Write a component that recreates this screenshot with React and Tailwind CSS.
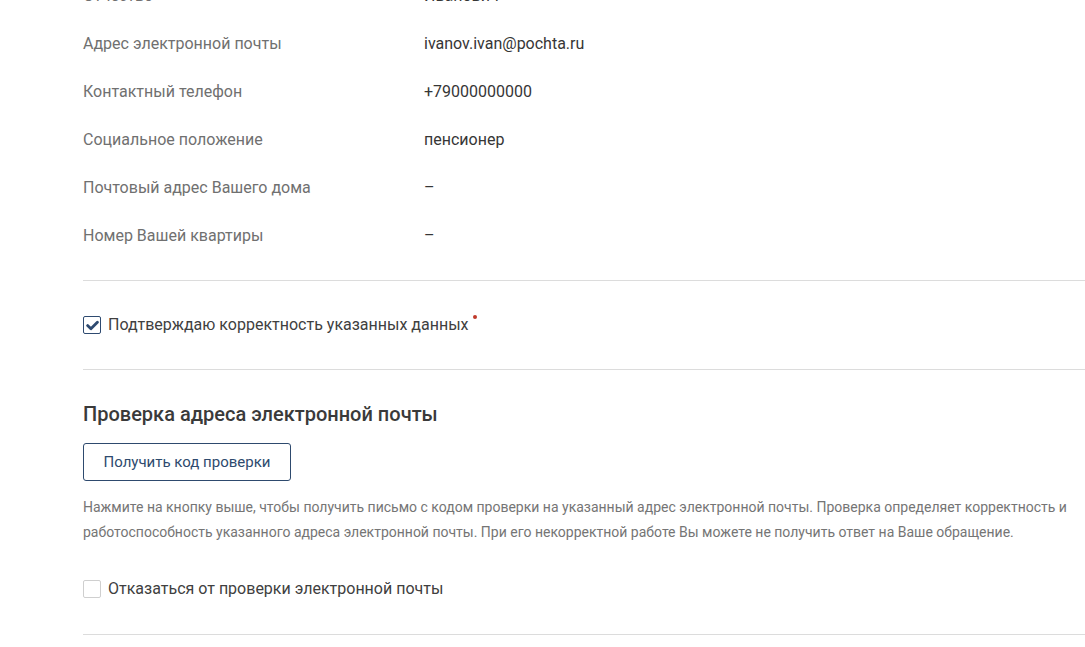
import React from "react";

const rows = [
  ["Отчество", "Иванович"],
  ["Адрес электронной почты", "ivanov.ivan@pochta.ru"],
  ["Контактный телефон", "+79000000000"],
  ["Социальное положение", "пенсионер"],
  ["Почтовый адрес Вашего дома", "–"],
  ["Номер Вашей квартиры", "–"],
];

function Check({ checked }) {
  return (
    <span
      className={
        "flex h-[18px] w-[18px] shrink-0 items-center justify-center rounded-[2px] border bg-white " +
        (checked ? "border-[#2e4a70]" : "border-[#cfcfcf]")
      }
    >
      {checked && (
        <svg width="13" height="11" viewBox="0 0 13 11">
          <path d="M1.6 5.6 L4.9 8.8 L11.4 2.2" fill="none" stroke="#2e4a70" strokeWidth="2.8" strokeLinecap="round" strokeLinejoin="round" />
        </svg>
      )}
    </span>
  );
}

export default function App() {
  return (
    <div className="h-[647px] w-[1085px] overflow-hidden bg-white font-['Roboto',sans-serif]">
      <div className="ml-[83px] mt-[-28px] w-[1020px]">
        <div className="flex flex-col">
          {rows.map(([l, v]) => (
            <div key={l} className="flex h-[48px] items-center text-[16px]">
              <div className="w-[341px] text-[#707070]">{l}</div>
              <div className="text-[#363636]">{v}</div>
            </div>
          ))}
        </div>
        <div className="mt-[20px] h-px bg-[#dcdcdc]" />
        <div className="flex h-[88px] items-center gap-[7px]">
          <Check checked />
          <span className="relative text-[16px] text-[#404040]">
            Подтверждаю корректность указанных данных
            <span className="absolute right-[-8px] top-[2px] h-[4px] w-[4px] rounded-full bg-[#c0392b]" />
          </span>
        </div>
        <div className="h-px bg-[#dcdcdc]" />
        <h2 className="mt-[32px] text-[20px] font-medium leading-[24px] text-[#3a3a3a]">
          Проверка адреса электронной почты
        </h2>
        <button className="mt-[17px] flex h-[38px] w-[208px] items-center justify-center rounded-[3px] border border-[#2e4a6e] text-[15px] text-[#2e4a6e]">
          Получить код проверки
        </button>
        <p className="mt-[14px] w-[990px] text-[14px] leading-[25px] text-[#757575]">
          Нажмите на кнопку выше, чтобы получить письмо с кодом проверки на указанный адрес электронной почты. Проверка определяет корректность и работоспособность указанного адреса электронной почты. При его некорректной работе Вы можете не получить ответ на Ваше обращение.
        </p>
        <div className="mt-[35px] flex items-center gap-[7px]">
          <Check />
          <span className="text-[16px] leading-[18px] text-[#404040]">Отказаться от проверки электронной почты</span>
        </div>
        <div className="mt-[36px] h-px bg-[#dcdcdc]" />
      </div>
    </div>
  );
}
